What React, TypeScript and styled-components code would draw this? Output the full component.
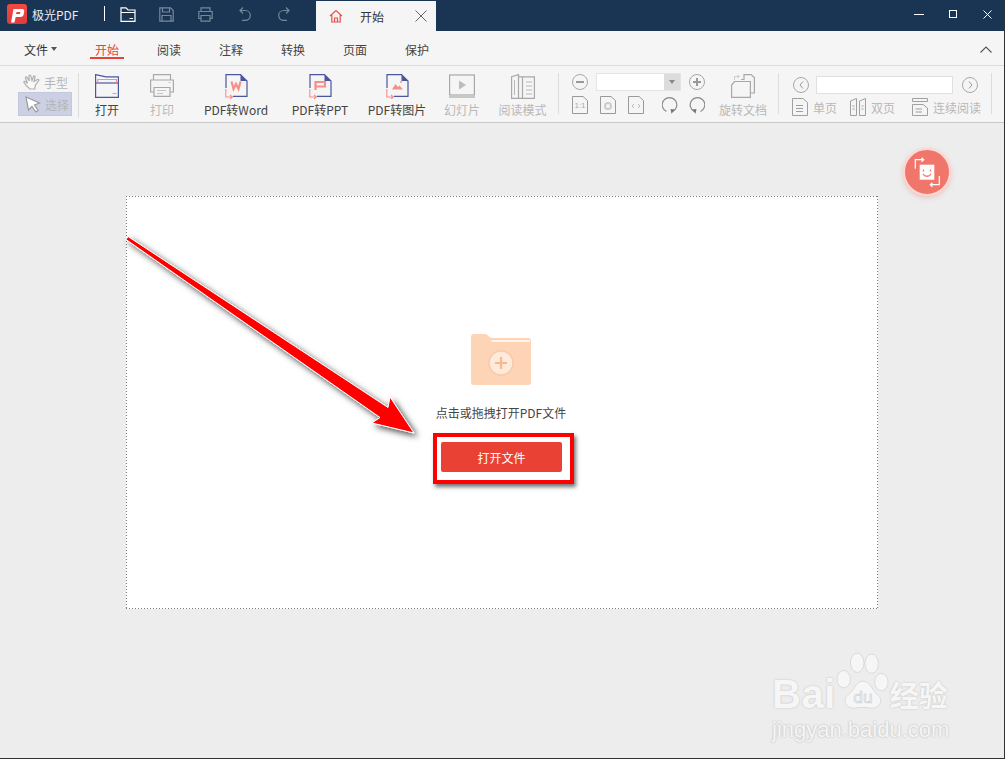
import React from 'react';
import styled, { createGlobalStyle } from 'styled-components';

const GlobalStyle = createGlobalStyle`
  html, body { margin: 0; padding: 0; background: #fff; }
  body { font-family: "Noto Sans CJK SC", "Liberation Sans", sans-serif; font-size: 12px; overflow: hidden; }
`;

const menus = ['开始', '阅读', '注释', '转换', '页面', '保护'];

const DocBase: React.FC<{ children: React.ReactNode }> = ({ children }) => (
  <svg width="23" height="25" viewBox="0 0 23 25" fill="none">
    <path d="M1 14V0.600H15.500L22 7V22.400H8" stroke="#4a569e" strokeWidth="1.200" />
    <path d="M15.500 0.600L22 7H15.500Z" fill="#4a569e" />
    <path d="M0.800 15V23H7M5 21L7.500 23L5 25" stroke="#f5908a" strokeWidth="1.100" />
    {children}
  </svg>
);

const App: React.FC = () => {
  return (
    <>
      <GlobalStyle />
      <Win>
        <TitleBar>
          <Brand>
            <LogoBox>
              <svg width="20" height="20" viewBox="0 0 20 20">
                <path fillRule="evenodd" fill="#fff" d="M6.500 5H15.200C16.700 5 17.500 6 17.200 7.500L16.600 10.500C16.300 12 15.200 13 13.700 13H8.700L7.500 18.500H4ZM9.500 8L9 10H13L13.400 8Z" />
              </svg>
            </LogoBox>
            <BrandName>极光PDF</BrandName>
          </Brand>
          <TitleDivider />
          <QuickIcons>
            <QuickSlot>
              <svg width="16" height="15" viewBox="0 0 16 15" fill="none" stroke="#fff" strokeWidth="1.200">
                <path d="M1 14.400V0.800H6L8 3H15V14.400Z" /><path d="M1 5.500H15M9.500 11.500H13" />
              </svg>
            </QuickSlot>
            <QuickSlot>
              <svg width="15" height="15" viewBox="0 0 15 15" fill="none" stroke="#75889c" strokeWidth="1.200">
                <path d="M0.800 0.800H11.500L14.200 3.500V14.200H0.800Z" /><path d="M3.500 0.800V5H10.500V0.800M3 14.200V8.500H12V14.200" />
              </svg>
            </QuickSlot>
            <QuickSlot>
              <svg width="15" height="15" viewBox="0 0 15 15" fill="none" stroke="#75889c" strokeWidth="1.200">
                <path d="M3 4.500V0.800H12V4.500M3 11.500H0.800V4.500H14.200V11.500H12M3 8.500H12V14.200H3Z" />
              </svg>
            </QuickSlot>
            <QuickSlot>
              <svg width="12" height="14" viewBox="0 0 12 14" fill="none" stroke="#75889c" strokeWidth="1.200">
                <path d="M4 0.500L1 3.500L4 6.500M1 3.500H6C9 3.500 11.300 5.500 11.300 8.300C11.300 11.300 9 13.400 6 13.400H3" />
              </svg>
            </QuickSlot>
            <QuickSlot>
              <svg width="12" height="14" viewBox="0 0 12 14" fill="none" stroke="#75889c" strokeWidth="1.200">
                <path d="M8 0.500L11 3.500L8 6.500M11 3.500H6C3 3.500 0.700 5.500 0.700 8.300C0.700 11.300 3 13.400 6 13.400H9" />
              </svg>
            </QuickSlot>
          </QuickIcons>
          <DocTab>
            <svg width="14" height="14" viewBox="0 0 14 14" fill="none" stroke="#e8514a" strokeWidth="1.200">
              <path d="M1 7L7 1.500L13 7M2.800 6V13H11.200V6M5.500 13V9H8.500V13" />
            </svg>
            <DocTabLabel>开始</DocTabLabel>
            <svg width="12" height="12" viewBox="0 0 12 12" stroke="#666" strokeWidth="1">
              <path d="M0.500 0.500L11.500 11.500M11.500 0.500L0.500 11.500" />
            </svg>
          </DocTab>
          <WinControls>
            <WinButton>
              <svg width="10" height="10" viewBox="0 0 10 10" stroke="#fff" strokeWidth="1"><path d="M0 5.500H10" /></svg>
            </WinButton>
            <WinButton>
              <svg width="8" height="8" viewBox="0 0 8 8" fill="none" stroke="#fff" strokeWidth="1"><rect x="0.500" y="0.500" width="7" height="7" /></svg>
            </WinButton>
            <WinButton>
              <svg width="9" height="9" viewBox="0 0 9 9" stroke="#fff" strokeWidth="1"><path d="M0.500 0.500L8.500 8.500M8.500 0.500L0.500 8.500" /></svg>
            </WinButton>
          </WinControls>
        </TitleBar>

        <MenuBar>
          <FileMenu>文件<Caret /></FileMenu>
          {menus.map((m, i) => (
            <MenuItem key={m} $active={i === 0}>{m}</MenuItem>
          ))}
          <Collapse>
            <svg width="12" height="7" viewBox="0 0 12 7" fill="none" stroke="#555" strokeWidth="1.100"><path d="M0.500 6.500L6 1L11.500 6.500" /></svg>
          </Collapse>
        </MenuBar>

        <ToolBar>
          <HandGroup>
            <HandRow>
              <svg width="18" height="16" viewBox="0 0 18 16" fill="#fafafa" stroke="#b0b0b0" strokeWidth="1.200">
                <path d="M7 15C5 13.500 2 10.500 1 8.500C0.500 7.500 1.800 6.800 2.500 7.700L4.500 9.500L2.500 4C2.200 2.900 3.600 2.400 4.100 3.400L6.300 7L6 2C6 0.900 7.500 0.800 7.700 1.900L9 6.500L10.500 2.500C10.900 1.500 12.300 1.900 12 3L11 7.500L14.500 5.500C15.500 5 16.300 6 15.500 6.900L12.500 11C12 12.500 12 13.500 11.800 15Z" />
              </svg>
              <HandLabel>手型</HandLabel>
            </HandRow>
            <SelectRow>
              <svg width="16" height="17" viewBox="0 0 16 17" fill="#fff" stroke="#9a9a9a" strokeWidth="1.200">
                <path d="M1 1L14.500 7L9.500 9L13 14.500L10.800 16L7 10.500L3.500 14Z" />
              </svg>
              <HandLabel>选择</HandLabel>
            </SelectRow>
          </HandGroup>
          <Divider $h={45} />
          <Tool $w={56}>
            <svg width="24" height="24" viewBox="0 0 24 24" fill="none" stroke="#4a569e" strokeWidth="1.200">
              <path d="M0.600 23.400V0.600L11 2.800H23.400V23.400Z" />
              <path d="M0.600 9H23.400" />
              <path d="M2.800 9V5.500H21.500V9M17.500 19.500H21.500" stroke="#f5908a" />
            </svg>
            <ToolLabel>打开</ToolLabel>
          </Tool>
          <Tool $w={54} $off>
            <svg width="24" height="23" viewBox="0 0 24 23" fill="none">
              <path d="M3.500 6V0.600H20.500V6M4 18H0.600V6H23.400V18H20M4 13.500H20V22.400H4Z" stroke="#a8a8a8" strokeWidth="1.200" />
              <path d="M7 16.500H16M7 19.500H13M18.500 8.500H20.500" stroke="#c4c4c4" strokeWidth="1" />
            </svg>
            <ToolLabel $off>打印</ToolLabel>
          </Tool>
          <Tool $w={94}>
            <DocBase><path d="M6.500 7.500L8.500 15L11 10L13.500 15L15.500 7.500" stroke="#f78f88" strokeWidth="2.200" /></DocBase>
            <ToolLabel>PDF转Word</ToolLabel>
          </Tool>
          <Tool $w={74}>
            <DocBase><path d="M6.500 16V8H16V12.500H7.500" stroke="#f78f88" strokeWidth="2.200" /></DocBase>
            <ToolLabel>PDF转PPT</ToolLabel>
          </Tool>
          <Tool $w={80}>
            <DocBase>
              <path d="M6 15.500L9.500 10L12 13L13.500 11.500L17 15.500Z" fill="#f78f88" />
              <circle cx="15" cy="8" r="1" fill="#f78f88" />
            </DocBase>
            <ToolLabel>PDF转图片</ToolLabel>
          </Tool>
          <Tool $w={50} $off>
            <svg width="26" height="24" viewBox="0 0 26 24" fill="none">
              <rect x="0.600" y="1" width="24.800" height="20" stroke="#a8a8a8" strokeWidth="1.200" />
              <path d="M0 23H26" stroke="#a8a8a8" strokeWidth="1.200" />
              <path d="M10 6.500L17 11L10 15.500Z" fill="#bbb" />
            </svg>
            <ToolLabel $off>幻灯片</ToolLabel>
          </Tool>
          <Tool $w={71} $off>
            <svg width="24" height="25" viewBox="0 0 24 25" fill="none">
              <path d="M0.600 2.800L7.500 0.600V24.400H0.600ZM7.500 2.800H23.400V24.400H7.500M11.500 2.800V24.400" stroke="#a8a8a8" strokeWidth="1.200" />
              <path d="M3.500 6V21M15 8H21M15 12H21M15 16H21M15 20H21" stroke="#b8b8b8" strokeWidth="1" />
            </svg>
            <ToolLabel $off>阅读模式</ToolLabel>
          </Tool>
          <Divider $h={41} />

          <ZoomGroup>
            <CtrlRow>
              <RoundBtn $size={16}>
                <svg width="8" height="2" viewBox="0 0 8 2"><path d="M0 1H8" stroke="#999" strokeWidth="2" /></svg>
              </RoundBtn>
              <ZoomCombo>
                <ComboArrow />
              </ZoomCombo>
              <RoundBtn $size={16}>
                <svg width="8" height="8" viewBox="0 0 8 8"><path d="M0 4H8M4 0V8" stroke="#999" strokeWidth="2" /></svg>
              </RoundBtn>
            </CtrlRow>
            <FitRow>
              <PageIcon>
                <svg width="16" height="18" viewBox="0 0 16 18" fill="none" stroke="#999" strokeWidth="1"><path d="M0.500 0.500H11L15.500 4.500V17.500H0.500Z" /></svg>
                <FitText>1:1</FitText>
              </PageIcon>
              <PageIcon>
                <svg width="16" height="18" viewBox="0 0 16 18" fill="none" stroke="#999" strokeWidth="1"><path d="M0.500 0.500H11L15.500 4.500V17.500H0.500Z" /><circle cx="8" cy="10" r="3" stroke="#ccc" strokeWidth="2" /></svg>
              </PageIcon>
              <PageIcon>
                <svg width="16" height="18" viewBox="0 0 16 18" fill="none" stroke="#999" strokeWidth="1"><path d="M0.500 0.500H11L15.500 4.500V17.500H0.500Z" /><path d="M6 8L4 10L6 12M10 8L12 10L10 12" stroke="#bbb" /></svg>
              </PageIcon>
              <RotateIcons>
                <svg width="16" height="18" viewBox="0 0 16 18" fill="none"><path d="M10.500 15.500A7.300 7.300 0 1 0 4.500 15.500" stroke="#8c8c8c" strokeWidth="1.200" /><path d="M8.500 13L13 13.500L9.500 17.800Z" fill="#777" /></svg>
                <svg width="16" height="18" viewBox="0 0 16 18" fill="none"><path d="M5.500 15.500A7.300 7.300 0 1 1 11.500 15.500" stroke="#8c8c8c" strokeWidth="1.200" /><path d="M7.500 13L3 13.500L6.500 17.800Z" fill="#777" /></svg>
              </RotateIcons>
            </FitRow>
          </ZoomGroup>
          <Tool $w={70} $off>
            <svg width="24" height="24" viewBox="0 0 24 24" fill="none">
              <path d="M10 5.500H13V0.600H20L23.400 3.500V19H20" stroke="#a8a8a8" strokeWidth="1.200" />
              <path d="M0.600 23.400V11L3.500 7.500H19.400V23.400Z" fill="#f5f5f5" stroke="#a8a8a8" strokeWidth="1.200" />
              <path d="M3.500 6V2.500H8M6.500 1L8.500 2.500L6.500 4" stroke="#ccc" strokeWidth="1" />
            </svg>
            <ToolLabel $off>旋转文档</ToolLabel>
          </Tool>
          <Divider $h={41} />

          <PageGroup>
            <PagerRow>
              <RoundBtn $size={16}>
                <svg width="5" height="8" viewBox="0 0 5 8" fill="none"><path d="M4 0.500L1 4L4 7.500" stroke="#999" /></svg>
              </RoundBtn>
              <PageInput />
              <RoundBtn $size={16}>
                <svg width="5" height="8" viewBox="0 0 5 8" fill="none"><path d="M1 0.500L4 4L1 7.500" stroke="#999" /></svg>
              </RoundBtn>
            </PagerRow>
            <ViewRow>
              <ViewMode $w={58}>
                <svg width="16" height="18" viewBox="0 0 16 18" fill="none" stroke="#a0a0a0"><path d="M0.500 0.500H11L15.500 4.500V17.500H0.500ZM4 7.500H11M4 10.500H11M4 13.500H11" /></svg>
                <ViewLabel>单页</ViewLabel>
              </ViewMode>
              <ViewMode $w={62}>
                <svg width="16" height="18" viewBox="0 0 16 18" fill="none" stroke="#a0a0a0"><path d="M0.500 3L6.500 0.500V17.500H0.500ZM9.500 3L15.500 0.500V17.500H9.500ZM2.500 8H4.500M2.500 11H4.500M11.500 8H13.500M11.500 11H13.500" /></svg>
                <ViewLabel>双页</ViewLabel>
              </ViewMode>
              <ViewMode $w={70}>
                <svg width="16" height="18" viewBox="0 0 16 18" fill="none" stroke="#a0a0a0"><path d="M0.500 0.500H15.500V3.500H0.500ZM0.500 6.500H11L15.500 10V17.500H0.500ZM3.500 11H10M3.500 14H10" /></svg>
                <ViewLabel>连续阅读</ViewLabel>
              </ViewMode>
            </ViewRow>
          </PageGroup>
          <Divider $h={41} />
        </ToolBar>

        <Workspace>
          <DropPanel>
            <svg width="60" height="51" viewBox="0 0 60 51">
              <path d="M3 0H14C15.500 0 16 0.500 17 1.500L20 4H57C59 4 60 5 60 7V48C60 50 59 51 57 51H3C1 51 0 50 0 48V3C0 1 1 0 3 0Z" fill="#fdd4b5" />
              <path d="M20 6H59V8H21Z" fill="#fff3ea" />
              <circle cx="30" cy="29" r="12" fill="#feeadb" stroke="#fbc8a4" strokeWidth="1.500" />
              <path d="M24 29H36M30 23V35" stroke="#f9b98d" strokeWidth="2.200" />
            </svg>
            <DropHint>点击或拖拽打开PDF文件</DropHint>
            <OpenButton>打开文件</OpenButton>
          </DropPanel>
          <FloatBadge>
            <svg width="30" height="32" viewBox="0 0 30 32" fill="none">
              <rect x="7.700" y="8.700" width="14.600" height="15" fill="#fff" />
              <path d="M11.500 13.500V15.500M18.500 13.500V15.500M11 18C12.500 21 17.500 21 19 18" stroke="#f0766b" strokeWidth="1.300" />
              <path d="M3.300 12.700V3.700H11M9.500 1.700L11.700 3.700L9.500 5.700M27.300 20V28.700H19M20.500 26.700L18.300 28.700L20.500 30.700" stroke="#fff" strokeWidth="1.200" />
            </svg>
          </FloatBadge>
          <Watermark>
            <WatermarkTop>
              <BaiText>Bai</BaiText>
              <PawMark width="54" height="72" viewBox="0 0 56 72">
                <g fill="#f6f6f6" stroke="#d8d8d8" strokeWidth="1">
                  <ellipse cx="8" cy="31" rx="7" ry="9" />
                  <ellipse cx="22" cy="14" rx="7" ry="10" />
                  <ellipse cx="37" cy="15" rx="7" ry="10" />
                  <ellipse cx="47" cy="34" rx="7" ry="9" />
                  <path d="M28 33C36 33 38 44 44 48C50 54 44 62 36 61C31 60 25 60 20 61C11 62 6 54 12 48C19 43 20 33 28 33Z" />
                </g>
                <text x="28" y="56" textAnchor="middle" fontSize="18" fontFamily="'Liberation Sans', sans-serif" fill="#f4f4f4" stroke="#ccc" strokeWidth="0.600">du</text>
              </PawMark>
              <JingYan>经验</JingYan>
            </WatermarkTop>
            <WatermarkUrl>jingyan.baidu.com</WatermarkUrl>
          </Watermark>
          <Annotation width="1003" height="640" viewBox="0 123 1003 640">
            <defs>
              <filter id="arrowShadow" x="-10%" y="-10%" width="125%" height="125%">
                <feDropShadow dx="3" dy="3" stdDeviation="3" floodColor="#000" floodOpacity="0.7" />
              </filter>
            </defs>
            <path
              d="M128 236.500L388 407.500L390 397L414 433L372 423L380 417.500L126 239.500Z"
              fill="#f00"
              stroke="#fff"
              strokeWidth="1"
              filter="url(#arrowShadow)"
            />
          </Annotation>
          <Highlight />
        </Workspace>
      </Win>
    </>
  );
};

const Win = styled.div`
  position: relative;
  box-sizing: border-box;
  width: 1005px;
  height: 759px;
  display: flex;
  flex-direction: column;
  border-right: 1px solid #333;
  border-bottom: 1px solid #333;
  overflow: hidden;
  background: #ededed;
`;

const TitleBar = styled.div`
  height: 31px;
  flex: none;
  display: flex;
  align-items: flex-end;
  background: #1a3553;
  color: #fff;
`;

const Brand = styled.div`
  width: 104px;
  height: 31px;
  padding-left: 7px;
  box-sizing: border-box;
  display: flex;
  align-items: center;
  gap: 5px;
`;

const LogoBox = styled.div`
  width: 20px;
  height: 20px;
  border-radius: 3px;
  background: linear-gradient(#f24a42, #e23a3a);
  display: flex;
  margin-top: -3px;
`;

const BrandName = styled.span`
  font-size: 12px;
  margin-top: -2px;
  color: #e8edf2;
`;

const TitleDivider = styled.div`
  width: 1px;
  height: 15px;
  background: #fff;
  margin-bottom: 10px;
`;

const QuickIcons = styled.div`
  display: flex;
  height: 31px;
  margin-left: 3px;
`;

const QuickSlot = styled.div`
  width: 39px;
  display: flex;
  justify-content: center;
  align-items: center;
  padding-bottom: 3px;
  box-sizing: border-box;
`;

const DocTab = styled.div`
  margin-left: 13px;
  width: 120px;
  height: 30px;
  box-sizing: border-box;
  padding: 0 9px 0 13px;
  display: flex;
  align-items: center;
  background: #f5f5f5;
  color: #333;
`;

const DocTabLabel = styled.span`
  flex: 1;
  text-align: center;
  font-size: 12px;
  padding-right: 14px;
`;

const WinControls = styled.div`
  margin-left: auto;
  display: flex;
  height: 31px;
`;

const WinButton = styled.div`
  width: 34px;
  height: 28px;
  display: flex;
  align-items: center;
  justify-content: center;
`;

const MenuBar = styled.div`
  height: 35px;
  flex: none;
  box-sizing: border-box;
  display: flex;
  align-items: stretch;
  background: #f5f5f5;
  border-bottom: 1px solid #dcdcdc;
  padding-left: 24px;
`;

const FileMenu = styled.div`
  width: 36px;
  margin-right: 30px;
  display: flex;
  align-items: center;
  gap: 3px;
  color: #333;
  white-space: nowrap;
  padding-top: 2px;
`;

const Caret = styled.span`
  width: 0;
  height: 0;
  border-left: 3.500px solid transparent;
  border-right: 3.500px solid transparent;
  border-top: 4px solid #555;
`;

const MenuItem = styled.div<{ $active?: boolean }>`
  width: 34px;
  height: 27px;
  margin: 1px 28px 7px 0;
  padding-top: 7px;
  display: flex;
  align-items: center;
  justify-content: center;
  box-sizing: border-box;
  color: ${p => (p.$active ? '#e8413c' : '#444')};
  box-shadow: ${p => (p.$active ? 'inset 0 -2px 0 #e8413c' : 'none')};
`;

const Collapse = styled.div`
  margin-left: auto;
  width: 36px;
  display: flex;
  align-items: center;
  justify-content: center;
  padding-top: 3px;
`;

const ToolBar = styled.div`
  height: 57px;
  flex: none;
  box-sizing: border-box;
  display: flex;
  align-items: flex-start;
  background: #f5f5f5;
  border-bottom: 1px solid #c8c8c8;
  padding: 6px 0 0 18px;
`;

const HandGroup = styled.div`
  width: 54px;
  margin-right: 6px;
  display: flex;
  flex-direction: column;
`;

const HandRow = styled.div`
  height: 20px;
  display: flex;
  align-items: center;
  gap: 3px;
  padding-left: 5px;
`;

const SelectRow = styled(HandRow)`
  height: 24px;
  gap: 4px;
  background: #ccd0e4;
  border: 1px solid #c4c8dc;
  box-sizing: border-box;
  padding-left: 6px;
`;

const HandLabel = styled.span`
  color: #b5b5b5;
  font-size: 12px;
  white-space: nowrap;
`;

const Divider = styled.div<{ $h: number }>`
  width: 1px;
  flex: none;
  background: #dcdcdc;
  height: ${p => p.$h}px;
  margin-top: 1px;
`;

const Tool = styled.div<{ $w: number; $off?: boolean }>`
  width: ${p => p.$w}px;
  height: 46px;
  flex: none;
  box-sizing: border-box;
  padding-top: 2px;
  display: flex;
  flex-direction: column;
  align-items: center;
  justify-content: space-between;
`;

const ToolLabel = styled.span<{ $off?: boolean }>`
  font-size: 12px;
  line-height: 16px;
  white-space: nowrap;
  color: ${p => (p.$off ? '#b8b8b8' : '#444')};
`;

const ZoomGroup = styled.div`
  width: 149px;
  flex: none;
  padding-left: 13px;
  box-sizing: border-box;
  display: flex;
  flex-direction: column;
  gap: 5px;
`;

const CtrlRow = styled.div`
  display: flex;
  align-items: center;
  gap: 8px;
  height: 18px;
  margin-top: 1px;
`;

const RoundBtn = styled.div<{ $size: number }>`
  width: ${p => p.$size}px;
  height: ${p => p.$size}px;
  flex: none;
  box-sizing: border-box;
  border: 1px solid #a8a8a8;
  border-radius: 50%;
  display: flex;
  align-items: center;
  justify-content: center;
`;

const ZoomCombo = styled.div`
  width: 85px;
  height: 18px;
  box-sizing: border-box;
  background: #fff;
  border: 1px solid #e4e4e4;
  display: flex;
  justify-content: flex-end;
`;

const ComboArrow = styled.div`
  width: 16px;
  background: #dcdcdc;
  display: flex;
  align-items: center;
  justify-content: center;
  &::after {
    content: '';
    border-left: 3.500px solid transparent;
    border-right: 3.500px solid transparent;
    border-top: 4px solid #888;
  }
`;

const FitRow = styled.div`
  display: flex;
  align-items: center;
  gap: 12px;
  height: 18px;
`;

const PageIcon = styled.div`
  position: relative;
  width: 16px;
  height: 18px;
  display: flex;
`;

const FitText = styled.span`
  position: absolute;
  inset: 3px 0 0 0;
  text-align: center;
  font-size: 8px;
  line-height: 14px;
  color: #aaa;
  font-family: "Liberation Sans", sans-serif;
`;

const RotateIcons = styled.div`
  display: flex;
  gap: 11px;
  margin-left: 6px;
`;

const PageGroup = styled.div`
  width: 212px;
  height: 44px;
  flex: none;
  box-sizing: border-box;
  padding-left: 14px;
  display: flex;
  flex-direction: column;
  justify-content: space-between;
`;

const PagerRow = styled.div`
  display: flex;
  align-items: center;
  height: 18px;
  margin-top: 4px;
  gap: 7px;
`;

const PageInput = styled.div`
  width: 137px;
  height: 18px;
  box-sizing: border-box;
  background: #fff;
  border: 1px solid #e0e0e0;
  margin-right: 2px;
`;

const ViewRow = styled.div`
  display: flex;
  align-items: center;
  height: 18px;
  margin-left: -1px;
`;

const ViewMode = styled.div<{ $w: number }>`
  width: ${p => p.$w}px;
  display: flex;
  align-items: center;
  gap: 5px;
`;

const ViewLabel = styled.span`
  color: #b8b8b8;
  font-size: 12px;
  white-space: nowrap;
`;

const Workspace = styled.div`
  position: relative;
  flex: 1;
  display: flex;
  align-items: flex-start;
  padding: 73px 0 0 126px;
  background: #ededed;
`;

const DropPanel = styled.div`
  width: 752px;
  height: 413px;
  box-sizing: border-box;
  background:
    repeating-linear-gradient(to right, #777 0 1px, transparent 1px 3px) 0 0 / 100% 1px no-repeat,
    repeating-linear-gradient(to right, #777 0 1px, transparent 1px 3px) 0 100% / 100% 1px no-repeat,
    repeating-linear-gradient(to bottom, #777 0 1px, transparent 1px 3px) 0 0 / 1px 100% no-repeat,
    repeating-linear-gradient(to bottom, #777 0 1px, transparent 1px 3px) 100% 0 / 1px 100% no-repeat,
    #fff;
  display: flex;
  flex-direction: column;
  align-items: center;
  padding: 138px 2px 0 0;
`;

const DropHint = styled.div`
  margin-top: 20px;
  line-height: 16px;
  font-size: 12px;
  color: #444;
`;

const OpenButton = styled.button`
  margin: 21px 0 0 1px;
  width: 121px;
  height: 30px;
  border: none;
  border-radius: 2px;
  background: #e94235;
  color: #fff;
  font: inherit;
  font-size: 12px;
  padding: 0;
`;

const FloatBadge = styled.div`
  position: absolute;
  left: 903px;
  top: 25px;
  width: 44px;
  height: 44px;
  border-radius: 50%;
  background: #f0766b;
  border: 2px solid #fdd8d2;
  box-shadow: 0 2px 5px rgba(240, 118, 107, 0.35);
  display: flex;
  align-items: center;
  justify-content: center;
`;

const Watermark = styled.div`
  position: absolute;
  left: 772px;
  top: 522px;
  width: 180px;
  color: #f6f6f6;
`;

const WatermarkTop = styled.div`
  display: flex;
  align-items: flex-end;
  height: 70px;
`;

const BaiText = styled.span`
  font-family: "Liberation Sans", sans-serif;
  font-size: 40px;
  line-height: 42px;
  font-weight: 700;
  letter-spacing: 0.5px;
  text-shadow: 0 0 2px #bbb;
`;

const PawMark = styled.svg`
  flex: none;
  margin-bottom: -5px;
`;

const JingYan = styled.span`
  font-size: 29px;
  line-height: 42px;
  font-weight: 700;
  white-space: nowrap;
  text-shadow: 0 0 2px #bbb;
`;

const WatermarkUrl = styled.div`
  font-family: "Liberation Sans", sans-serif;
  font-size: 22px;
  line-height: 22px;
  margin-top: 4px;
  white-space: nowrap;
  text-shadow: 0 0 2px #aaa;
`;

const Annotation = styled.svg`
  position: absolute;
  left: 0;
  top: 0;
  pointer-events: none;
`;

const Highlight = styled.div`
  position: absolute;
  left: 433px;
  top: 310px;
  width: 141px;
  height: 51px;
  box-sizing: border-box;
  border: 4px solid #f00;
  box-shadow: 2px 3px 4px rgba(0, 0, 0, 0.55);
`;

export default App;
